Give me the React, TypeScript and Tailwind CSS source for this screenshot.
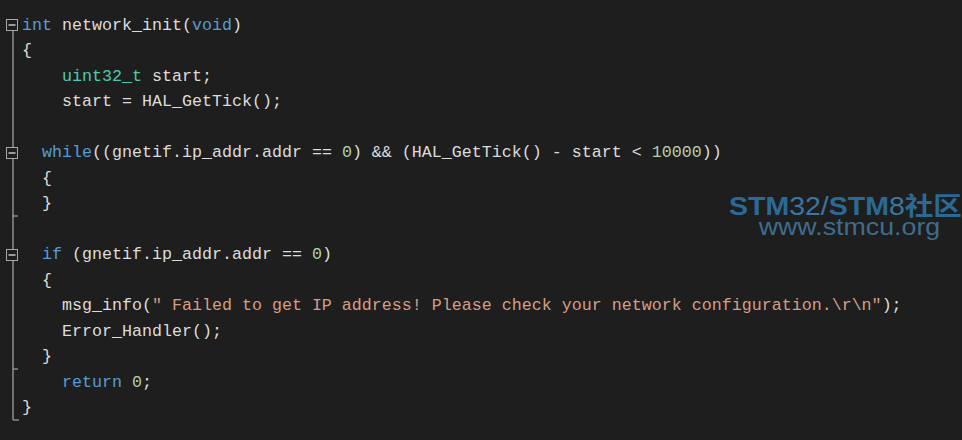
import React from "react";

// token colours, VS dark theme
const KW = "text-[#569cd6]";
const TY = "text-[#4ec9b0]";
const NUM = "text-[#b5cea8]";
const STR = "text-[#d69d85]";
const TXT = "text-[#dcdcdc]";

type Tok = [string, string];

const code: Tok[][] = [
  [["int", KW], [" network_init(", TXT], ["void", KW], [")", TXT]],
  [["{", TXT]],
  [["    ", TXT], ["uint32_t", TY], [" start;", TXT]],
  [["    start = HAL_GetTick();", TXT]],
  [],
  [["  ", TXT], ["while", KW], ["((gnetif.ip_addr.addr == ", TXT], ["0", NUM], [") && (HAL_GetTick() - start < ", TXT], ["10000", NUM], ["))", TXT]],
  [["  {", TXT]],
  [["  }", TXT]],
  [],
  [["  ", TXT], ["if", KW], [" (gnetif.ip_addr.addr == ", TXT], ["0", NUM], [")", TXT]],
  [["  {", TXT]],
  [["    msg_info(", TXT], ["\" Failed to get IP address! Please check your network configuration.\\r\\n\"", STR], [");", TXT]],
  [["    Error_Handler();", TXT]],
  [["  }", TXT]],
  [["    ", TXT], ["return", KW], [" ", TXT], ["0", NUM], [";", TXT]],
  [["}", TXT]],
];

function FoldBox({ y }: { y: number }) {
  return (
    <g>
      <rect x={6.5} y={y + 0.5} width={11} height={11} fill="#1e1e1e" stroke="#a8a8a8" strokeWidth={1} />
      <line x1={8.5} y1={y + 6} x2={15.5} y2={y + 6} stroke="#c8c8c8" strokeWidth={1.5} />
    </g>
  );
}

function Gutter() {
  return (
    <svg width={22} height={440} className="shrink-0">
      <line x1={13} y1={31} x2={13} y2={420} stroke="#a0a0a0" strokeWidth={1.3} />
      <line x1={13} y1={216} x2={18} y2={216} stroke="#a0a0a0" strokeWidth={1.2} />
      <line x1={13} y1={369} x2={18} y2={369} stroke="#a0a0a0" strokeWidth={1.2} />
      <line x1={13} y1={420} x2={19} y2={420} stroke="#a0a0a0" strokeWidth={1.2} />
      <FoldBox y={19} />
      <FoldBox y={147} />
      <FoldBox y={249} />
    </svg>
  );
}

function Watermark() {
  return (
    <div className="absolute left-[729px] top-[196px] font-['Liberation_Sans',Arial,'Noto_Sans_CJK_SC',sans-serif] origin-left scale-x-[1.14]">
      <div className="flex h-[20px] text-[25px] leading-[20px] whitespace-nowrap text-[#2b6a94]">
        <span className="inline-block h-[20px] font-bold">STM</span>
        <span className="inline-block h-[20px] text-[#3a76a0]">32/</span>
        <span className="inline-block h-[20px] font-bold">STM</span>
        <span className="inline-block h-[20px] text-[#3a76a0]">8</span>
        <span className="inline-block h-[20px] font-bold">社区</span>
      </div>
      <div className="mt-[2px] flex h-[18px] text-[23.5px] leading-[18px] whitespace-nowrap text-[#3e6d8c] pl-[26px]">
        <span className="inline-block h-[18px]">www.stmcu.org</span>
      </div>
    </div>
  );
}

export default function App() {
  return (
    <div className="relative w-[962px] h-[440px] bg-[#1e1e1e] overflow-hidden flex">
      <Gutter />
      <pre className="pt-[13px] font-['Liberation_Mono','DejaVu_Sans_Mono',monospace] text-[16.67px] leading-[25.47px] m-0">
        {code.map((line, i) => (
          <div key={i} className="h-[25.47px] whitespace-pre">
            {line.map(([t, c], j) => (
              <span key={j} className={c}>
                {t}
              </span>
            ))}
          </div>
        ))}
      </pre>
      <Watermark />
    </div>
  );
}
